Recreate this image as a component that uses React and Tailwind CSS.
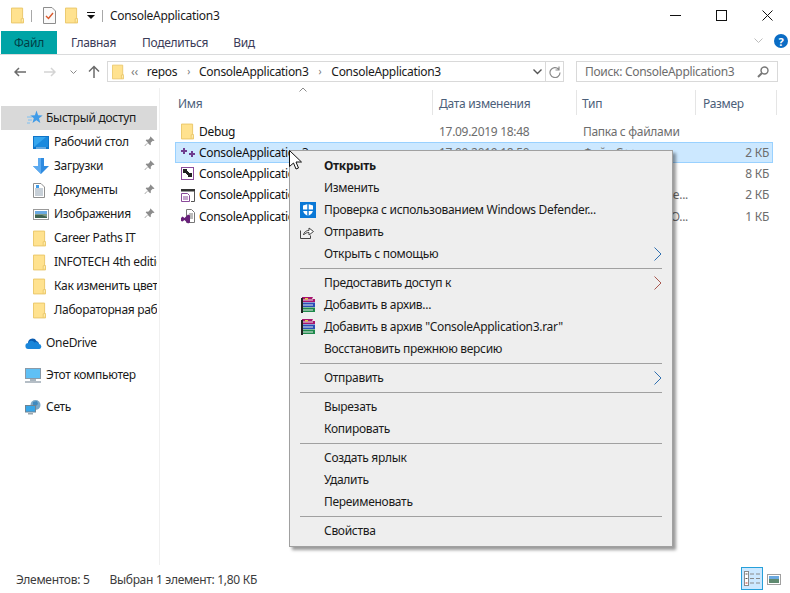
import React from 'react'

const Folder = ({ className = 'w-[13px] h-[17px]' }) => (
  <svg className={className} viewBox="0 0 14 17" fill="none">
    <path d="M.5.5h12v11.5h1v4.500H.5z" fill="#ffe28f" stroke="#e9c667" />
    <path d="M11 16.500V12h2.500" stroke="#e9c667" fill="#fff3c4" />
  </svg>
)

const Pin = () => (
  <svg className="w-[11px] h-[11px]" viewBox="0 0 11 11">
    <path d="M6.500.5l4 4-1 .6-.8-.3-2 2 .2 1.700-.8.800-2.200-2.200L1 10l-.5-.5 3.400-2.900L1.700 4.400l.8-.8 1.700.2 2-2-.3-.8z" fill="#8c8c8c" />
  </svg>
)

const StarIcon = () => (
  <svg className="w-[16px] h-[16px]" viewBox="0 0 16 16">
    <path d="M9.500.500l1.600 4.700 4.600.2-3.700 2.900 1.300 4.700-3.900-2.700-3.900 2.700 1.300-4.700L3.200 5.400l4.700-.2z" fill="#3f9be8" />
    <path d="M0 7h5M1 10h4M0 13h3" stroke="#7cc0f2" strokeWidth="1" />
  </svg>
)

const DesktopIcon = () => (
  <svg className="w-[16px] h-[13px]" viewBox="0 0 16 13">
    <rect width="16" height="13" fill="#0f74c8" />
    <path d="M1 1h14v10H1z" fill="#36a6ee" />
    <path d="M1 11L13 1h2v10z" fill="#1b8ade" />
    <rect x="3" y="11.500" width="10" height="1" fill="#b9dcf5" />
  </svg>
)

const DownloadIcon = () => (
  <svg className="w-[16px] h-[16px]" viewBox="0 0 16 16">
    <path d="M5 0h6v8h5l-8 8-8-8h5z" fill="#2f8be0" />
    <path d="M5 0h3v16L0 8h5z" fill="#5caaf0" />
  </svg>
)

const DocsIcon = () => (
  <svg className="w-[12px] h-[15px]" viewBox="0 0 12 15" fill="none">
    <path d="M.5.500H8L11.500 4v10.500H.5z" fill="#fff" stroke="#8f8f8f" />
    <path d="M2 6h8M2 8h8M2 10h8M2 12h8" stroke="#8fa0b0" />
    <path d="M3 2h3v3H3z" fill="#3f9be8" />
  </svg>
)

const PicturesIcon = () => (
  <svg className="w-[16px] h-[11px]" viewBox="0 0 16 11">
    <rect x=".5" y=".5" width="15" height="10" fill="#fff" stroke="#9a9a9a" />
    <rect x="2" y="2" width="12" height="3.500" fill="#6aa9e0" />
    <rect x="2" y="5" width="12" height="4" fill="#7f9a86" />
    <path d="M2 6h7l5 2v1H2z" fill="#3f6350" />
  </svg>
)

const OneDriveIcon = () => (
  <svg className="w-[17px] h-[11px]" viewBox="0 0 17 11">
    <path d="M3 5a4.500 4.500 0 0 1 8.500-2 3.500 3.500 0 0 1 2.500 3H6z" fill="#0a5cb0" />
    <path d="M3.500 11a3 3 0 0 1-.2-6 3.500 3.500 0 0 1 6.200-.5 3 3 0 0 1 4.300 1.600 2.500 2.500 0 0 1 .7 4.900z" fill="#1a86da" />
  </svg>
)

const ComputerIcon = () => (
  <svg className="w-[16px] h-[15px]" viewBox="0 0 16 15">
    <rect x=".5" y=".5" width="15" height="10" fill="#5fc0f5" stroke="#8a9aa8" />
    <rect x="5" y="11" width="6" height="2" fill="#a8b4bd" />
    <rect y="13" width="16" height="2" fill="#b5bec6" />
  </svg>
)

const NetworkIcon = () => (
  <svg className="w-[16px] h-[15px]" viewBox="0 0 16 15">
    <circle cx="10.500" cy="5" r="5" fill="#7aa8c8" />
    <path d="M8 2l4-1 1 3-3 3-2-2z" fill="#3f8ac0" />
    <rect x=".5" y="5.500" width="10" height="6.500" fill="#38a6e8" stroke="#6f8494" />
    <rect x="3" y="13" width="5" height="1.500" fill="#9aa6ae" />
  </svg>
)

const CppIcon = () => (
  <svg className="w-[14px] h-[10px]" viewBox="0 0 14 10" fill="#6f3d8f">
    <path d="M2 0h2v2h2v2H4v2H2V4H0V2h2z" />
    <path d="M10 3h2v2h2v2h-2v2h-2V7H8V5h2z" />
  </svg>
)

const FiltersIcon = () => (
  <svg className="w-[13px] h-[13px]" viewBox="0 0 13 13">
    <rect x=".5" y=".5" width="12" height="12" fill="#fff" stroke="#8a4a9a" />
    <path d="M2 2h4v2h1v1h1v1h3v4H7V8H6V7H5V6H2z" fill="#222" />
  </svg>
)

const HeaderIcon = () => (
  <svg className="w-[14px] h-[13px]" viewBox="0 0 14 13" fill="none">
    <rect width="14" height="2.500" fill="#333" />
    <path d="M13.500 2v10.500H10" stroke="#555" />
    <path d="M.5 4.500h6l2 2v6h-8z" fill="#fff" stroke="#8a4a9a" />
    <path d="M2 8h5M2 10h5" stroke="#8a4a9a" />
  </svg>
)

const ProjIcon = () => (
  <svg className="w-[14px] h-[15px]" viewBox="0 0 14 15" fill="none">
    <path d="M5.500.500h5l3 3v10h-8z" fill="#fff" stroke="#777" />
    <path d="M8 5h4M8 7h4M8 9h4" stroke="#777" />
    <path d="M0 9l1.500-1.500L3.500 9 7 5.500 9 6.500v7l-2 1-3.500-3.500-2 1.500L0 12z" fill="#68217a" />
  </svg>
)

const ShieldIcon = () => (
  <svg className="w-[16px] h-[16px]" viewBox="0 0 16 16">
    <rect width="16" height="16" fill="#0a78d6" />
    <path d="M8 2l5 1.500V8c0 3-2.500 5-5 6-2.500-1-5-3-5-6V3.500z" fill="#fff" />
    <path d="M7.300 2v5.500H3V9h4.300v5h1.400V9H13V7.500H8.700V2z" fill="#0a78d6" />
  </svg>
)

const ShareIcon = () => (
  <svg className="w-[14px] h-[14px]" viewBox="0 0 14 14" fill="none" stroke="#444">
    <path d="M.5 5.500v8h10v-3" />
    <path d="M3.500 10c.5-3 2.500-4.500 5.500-4.500V3l4.500 3.500L9 10V7.500c-2 0-4 .5-5.500 2.500z" fill="#fff" />
  </svg>
)

const RarIcon = () => (
  <svg className="w-[16px] h-[16px]" viewBox="0 0 16 16">
    <path d="M2 0h11l-1 2h3v3H2z" fill="#a8146e" />
    <rect x="1" y="1" width="2" height="15" fill="#222" />
    <path d="M3 5.500h12V10H3z" fill="#2a4fb8" />
    <path d="M3 10.500h12V15H3z" fill="#1f8a4c" />
    <path d="M3 3h10M3 8h10M3 13h10" stroke="#e8e8e8" />
    <rect x="5" y="1" width="3" height="1.500" fill="#e8c84a" />
  </svg>
)

const CheckDocIcon = () => (
  <svg className="w-[13px] h-[17px]" viewBox="0 0 13 17" fill="none">
    <path d="M.5.500H9L12.500 4v12.500H.5z" fill="#fafafa" stroke="#8d8d8d" />
    <path d="M3 9l2.500 2.500L10 6" stroke="#d9582b" strokeWidth="1.400" />
  </svg>
)

const Chevron = ({ color }) => (
  <svg className="w-[8px] h-[14px]" viewBox="0 0 8 14" fill="none">
    <path d="M.5.500L7 7 .5 13.500" stroke={color} />
  </svg>
)

const quick = [
  [<DesktopIcon />, 'Рабочий стол', true],
  [<DownloadIcon />, 'Загрузки', true],
  [<DocsIcon />, 'Документы', true],
  [<PicturesIcon />, 'Изображения', true],
  [<Folder />, 'Career Paths IT'],
  [<Folder />, 'INFOTECH 4th edition'],
  [<Folder />, 'Как изменить цветовую'],
  [<Folder />, 'Лабораторная работа'],
]

const files = [
  { icon: <Folder />, name: 'Debug', date: '17.09.2019 18:48', type: 'Папка с файлами', size: '' },
  { icon: <CppIcon />, name: 'ConsoleApplication3.cpp', date: '17.09.2019 18:50', type: 'Файл С++', size: '2 КБ', selected: true },
  { icon: <FiltersIcon />, name: 'ConsoleApplication3.sln', date: '17.09.2019 18:48', type: 'Файл решения', size: '8 КБ' },
  { icon: <HeaderIcon />, name: 'ConsoleApplication3.vcxproj', date: '17.09.2019 18:48', type: 'C/C++ Header File...', size: '2 КБ', h: 'h-[22px]', right: true },
  { icon: <ProjIcon />, name: 'ConsoleApplication3.vcxproj', date: '17.09.2019 18:48', type: 'Файл VC++ PRO...', size: '1 КБ', right: true },
]

// null means separator
const menu = [
  { label: 'Открыть', bold: true },
  { label: 'Изменить' },
  { label: 'Проверка с использованием Windows Defender...', icon: <ShieldIcon /> },
  { label: 'Отправить', icon: <ShareIcon /> },
  { label: 'Открыть с помощью', arrow: '#2f6fb0' },
  null,
  { label: 'Предоставить доступ к', arrow: '#a8574f' },
  { label: 'Добавить в архив...', icon: <RarIcon /> },
  { label: 'Добавить в архив "ConsoleApplication3.rar"', icon: <RarIcon /> },
  { label: 'Восстановить прежнюю версию' },
  null,
  { label: 'Отправить', arrow: '#2f6fb0' },
  null,
  { label: 'Вырезать' },
  { label: 'Копировать' },
  null,
  { label: 'Создать ярлык' },
  { label: 'Удалить' },
  { label: 'Переименовать' },
  null,
  { label: 'Свойства' },
]

function TitleBar() {
  return (
    <div className="h-[31px] flex items-center text-[#1a1a1a]">
      <div className="ml-[11px]"><Folder /></div>
      <div className="ml-[7px] w-px h-[12px] bg-[#a8a8a8]" />
      <div className="ml-[11px]"><CheckDocIcon /></div>
      <div className="ml-[9px]"><Folder /></div>
      <svg className="ml-[9px] w-[8px] h-[8px]" viewBox="0 0 8 8">
        <rect y="0" width="8" height="1" fill="#111" />
        <path d="M0 3h8L4 7z" fill="#111" />
      </svg>
      <div className="ml-[7px] w-px h-[12px] bg-[#a8a8a8]" />
      <div className="ml-[7px] pt-px">ConsoleApplication3</div>
      <div className="ml-auto flex items-center">
        <svg className="w-[11px] h-[11px]" viewBox="0 0 11 11"><path d="M0 5.500h11" stroke="#111" /></svg>
        <svg className="ml-[35px] w-[11px] h-[11px]" viewBox="0 0 11 11" fill="none"><rect x=".5" y=".5" width="10" height="10" stroke="#111" /></svg>
        <svg className="ml-[35px] mr-[17px] w-[11px] h-[11px]" viewBox="0 0 11 11"><path d="M.5.500l10 10M10.500.500l-10 10" stroke="#111" /></svg>
      </div>
    </div>
  )
}

function Ribbon() {
  return (
    <div className="h-[24px] flex border-b border-[#dadbdc] pl-px">
      <div className="w-[56px] h-[23px] bg-[#00a4a6] text-[#003f46] flex items-center justify-center">Файл</div>
      <div className="ml-[14px] text-[#3b3b58] leading-[24px]">Главная</div>
      <div className="ml-[26px] text-[#3b3b58] leading-[24px]">Поделиться</div>
      <div className="ml-[25px] text-[#3b3b58] leading-[24px]">Вид</div>
      <svg className="ml-auto mt-[7px] w-[9px] h-[6px]" viewBox="0 0 9 6" fill="none"><path d="M.5.500l4 4 4-4" stroke="#bcbcbc" /></svg>
      <div className="ml-[11px] mr-[2px] mt-[3px] w-[14px] h-[14px] rounded-full bg-[#0a6cc4] text-white text-[11px] font-bold flex items-center justify-center leading-none">?</div>
    </div>
  )
}

function AddressBar() {
  return (
    <div className="h-[33px] pt-[6px] flex">
      <svg className="ml-[14px] mt-[6px] w-[12px] h-[10px]" viewBox="0 0 12 10" fill="none"><path d="M12 5H1M5 1L1 5l4 4" stroke="#6b6b6b" strokeWidth="1.500" /></svg>
      <svg className="ml-[18px] mt-[6px] w-[12px] h-[10px]" viewBox="0 0 12 10" fill="none"><path d="M0 5h11M7 1l4 4-4 4" stroke="#d4d4d4" strokeWidth="1.500" /></svg>
      <svg className="ml-[14px] mt-[9px] w-[7px] h-[5px]" viewBox="0 0 7 5" fill="none"><path d="M.5.500l3 3 3-3" stroke="#8a8a8a" /></svg>
      <svg className="ml-[11px] mt-[4px] w-[12px] h-[13px]" viewBox="0 0 12 13" fill="none"><path d="M6 13V2M1 6.500L6 1.500l5 5" stroke="#6b6b6b" strokeWidth="1.500" /></svg>
      <div className="ml-[7px] w-[439px] h-[21px] border border-[#d9d9d9] flex items-center text-[#1a1a1a]">
        <div className="ml-[4px]"><Folder className="w-[12px] h-[16px]" /></div>
        <span className="ml-[7px] text-[#7a7a7a]">‹‹</span>
        <span className="ml-[9px]">repos</span>
        <span className="ml-[10px] text-[#7a7a7a] text-[10px]">›</span>
        <span className="ml-[9px]">ConsoleApplication3</span>
        <span className="ml-[10px] text-[#7a7a7a] text-[10px]">›</span>
        <span className="ml-[10px]">ConsoleApplication3</span>
      </div>
      <div className="-ml-px w-[19px] h-[21px] border border-[#d9d9d9] flex items-center justify-center relative">
        <svg className="absolute -left-[13px] w-[9px] h-[6px]" viewBox="0 0 9 6" fill="none"><path d="M.5.500l4 4 4-4" stroke="#555" strokeWidth="1.400" /></svg>
        <svg className="w-[12px] h-[12px]" viewBox="0 0 12 12" fill="none"><path d="M9.500 3a5 5 0 1 0 1.500 3.500M10 .500V4H6.500" stroke="#8a8a8a" strokeWidth="1.200" /></svg>
      </div>
      <div className="ml-[12px] w-[202px] h-[21px] border border-[#d9d9d9] flex items-center justify-between pl-[8px] pr-[8px] text-[#6d6d6d]">
        <span>Поиск: ConsoleApplication3</span>
        <svg className="w-[12px] h-[12px]" viewBox="0 0 12 12" fill="none"><circle cx="7.500" cy="4.500" r="3.500" stroke="#777" strokeWidth="1.400" /><path d="M5 7L1 11" stroke="#777" strokeWidth="2" /></svg>
      </div>
    </div>
  )
}

function Sidebar() {
  return (
    <div className="w-[160px] shrink-0 border-r border-[#f0f0f0] pt-[18px] overflow-hidden text-[#1a1a1a]">
      <div className="ml-px w-[156px] h-[24px] bg-[#d9d9d9] flex items-center">
        <div className="ml-[26px] w-[19px]"><StarIcon /></div>
        <span>Быстрый доступ</span>
      </div>
      {quick.map(([icon, label, pinned]) => (
        <div key={label} className="h-[24px] flex items-center w-[157px] overflow-hidden relative">
          <div className="ml-[33px] w-[21px] shrink-0 flex justify-start">{icon}</div>
          <span className="whitespace-nowrap">{label}</span>
          {pinned && <div className="absolute left-[144px] top-[6px]"><Pin /></div>}
        </div>
      ))}
      <div className="mt-[9px] h-[24px] flex items-center">
        <div className="ml-[25px] w-[21px]"><OneDriveIcon /></div>
        <span>OneDrive</span>
      </div>
      <div className="mt-[8px] h-[24px] flex items-center">
        <div className="ml-[25px] w-[21px]"><ComputerIcon /></div>
        <span>Этот компьютер</span>
      </div>
      <div className="mt-[8px] h-[24px] flex items-center">
        <div className="ml-[25px] w-[21px]"><NetworkIcon /></div>
        <span>Сеть</span>
      </div>
    </div>
  )
}

function FileList() {
  return (
    <div className="flex-1 min-w-0 pl-[15px]">
      <div className="h-[33px] pt-[2px] flex text-[#4c607a] relative">
        <svg className="absolute left-[124px] -top-px w-[8px] h-[5px]" viewBox="0 0 8 5" fill="none"><path d="M.5 4.500L4 1l3.500 3.500" stroke="#8a8a8a" /></svg>
        <div className="w-[258px] h-[25px] pl-[3px] pt-[5px] border-r border-[#e5e5e5]">Имя</div>
        <div className="w-[144px] h-[25px] pl-[6px] pt-[5px] border-r border-[#e5e5e5]">Дата изменения</div>
        <div className="w-[119px] h-[25px] pl-[5px] pt-[5px] border-r border-[#e5e5e5]">Тип</div>
        <div className="w-[81px] h-[25px] pl-[7px] pt-[5px] border-r border-[#e5e5e5]">Размер</div>
      </div>
      {files.map((f, i) => (
        <div
          key={i}
          className={`${f.h || 'h-[21px]'} w-[598px] flex items-center ${f.selected ? 'bg-[#cce8ff] border border-[#99d1ff]' : 'border border-transparent'}`}
        >
          <div className="ml-[5px] w-[18px] shrink-0">{f.icon}</div>
          <div className="w-[240px] shrink-0 text-[#111] whitespace-nowrap overflow-hidden">{f.name}</div>
          <div className="w-[144px] shrink-0 text-[#6d6d6d] whitespace-nowrap">{f.date}</div>
          <div className={`w-[105px] shrink-0 text-[#6d6d6d] whitespace-nowrap overflow-hidden ${f.right ? 'text-right' : ''}`}>{f.type}</div>
          <div className="w-[81px] shrink-0 text-right text-[#6d6d6d]">{f.size}</div>
        </div>
      ))}
    </div>
  )
}

function ContextMenu() {
  return (
    <div className="absolute left-[289px] top-[150px] w-[384px] h-[397px] bg-[#eeeeee] border border-[#a0a0a0] py-[4px] shadow-[3px_3px_3px_rgba(0,0,0,0.4)] text-[#1a1a1a]">
      {menu.map((item, i) =>
        item === null ? (
          <div key={i} className="h-[7px] flex items-center pl-[10px]">
            <div className="w-[362px] h-px bg-[#a0a0a0]" />
          </div>
        ) : (
          <div key={i} className="h-[22px] flex items-center">
            <div className="w-[34px] pl-[10px] shrink-0">{item.icon}</div>
            <span className={item.bold ? 'font-bold' : ''}>{item.label}</span>
            {item.arrow && <div className="ml-auto mr-[10px] flex items-center"><Chevron color={item.arrow} /></div>}
          </div>
        )
      )}
    </div>
  )
}

function StatusBar() {
  return (
    <div className="h-[28px] flex items-center pl-[16px] text-[#3c3c3c]">
      <span className="pt-px">Элементов: 5</span>
      <span className="ml-[20px] pt-px">Выбран 1 элемент: 1,80 КБ</span>
      <div className="ml-auto mb-px w-[22px] h-[23px] bg-[#cce8ff] border border-[#26a0da] flex items-center justify-center">
        <svg className="w-[16px] h-[15px]" viewBox="0 0 16 15" fill="none">
          <rect x=".5" y=".5" width="4" height="14" fill="#fff" stroke="#8a8a8a" />
          <path d="M1.500 2.500h2v1h-2zM1.500 7h2v1h-2z" fill="#555" />
          <path d="M1.500 11.500h2v1h-2z" fill="#c03a2b" />
          <path d="M6 3h4M12 3h4M6 7.500h4M12 7.500h4M6 12h4M12 12h4" stroke="#8a8a8a" />
        </svg>
      </div>
      <div className="ml-[4px] mr-[9px]">
        <svg className="w-[14px] h-[11px]" viewBox="0 0 14 11">
          <rect x=".5" y=".5" width="13" height="10" fill="#fff" stroke="#a0a0a0" />
          <rect x="2" y="2" width="10" height="3" fill="#6aa9e0" />
          <rect x="2" y="5" width="10" height="4" fill="#5f8a70" />
        </svg>
      </div>
    </div>
  )
}

export default function App() {
  return (
    <div className="relative w-[790px] h-[593px] bg-white flex flex-col overflow-hidden text-[12px] tracking-[-0.3px] font-['Noto_Sans',sans-serif]">
      <TitleBar />
      <Ribbon />
      <AddressBar />
      <div className="flex-1 min-h-0 flex">
        <Sidebar />
        <FileList />
      </div>
      <StatusBar />
      <ContextMenu />
      {/* mouse pointer */}
      <svg className="absolute left-[289px] top-[150px] w-[13px] h-[20px]" viewBox="0 0 13 20">
        <path d="M.5.500v16l4-3.500 2.500 6 2.500-1-2.500-6h5.500z" fill="#fff" stroke="#111" />
      </svg>
    </div>
  )
}
